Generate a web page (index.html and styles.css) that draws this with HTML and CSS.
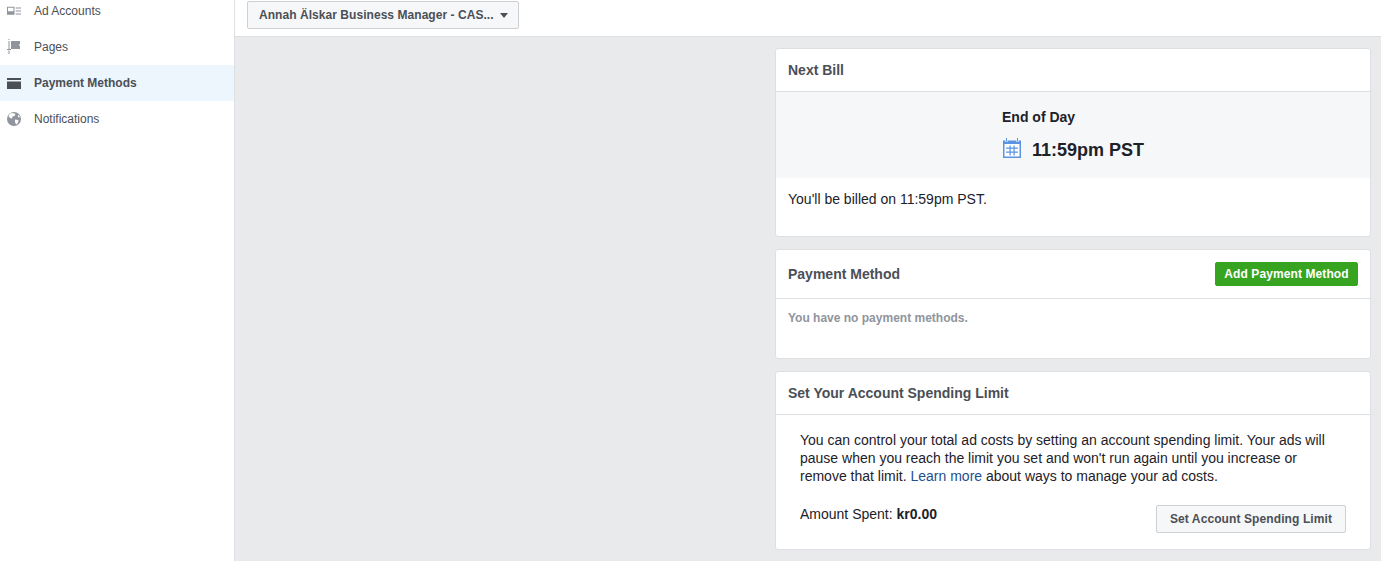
FILE: index.html
```html
<!DOCTYPE html>
<html lang="en">
<head>
<meta charset="utf-8">
<title>Payment Methods</title>
<link rel="stylesheet" href="styles.css">
</head>
<body>
<div class="app">
  <aside class="sidebar">
    <a class="nav-item">
      <svg class="nav-icon" viewBox="0 0 14 14"><path fill="#90949c" fill-rule="evenodd" d="M0 2.700h7.500v8H0zM1 3.700v3.500h5.500V3.700z"/><path fill="#90949c" d="M8.700 3.500H14v1H8.700zM8.700 6.500H14v1H8.700zM8.700 9.500H14v1H8.700z"/></svg>
      <span>Ad Accounts</span>
    </a>
    <a class="nav-item">
      <svg class="nav-icon flag" viewBox="0 0 14 15"><path fill="#90949c" d="M1.500 0h1v1h-1zM1.500 2h1v8h-1zM0 10h4v1H0zM1.500 11.500h1V15h-1zM4 2h9v2.500l-1 1.500 1 1.500V10H4z"/></svg>
      <span>Pages</span>
    </a>
    <a class="nav-item active">
      <svg class="nav-icon wide" viewBox="0 0 14 11"><path fill="#4b4f56" d="M0 0h14v2H0zM0 3.500h14V11H0z"/></svg>
      <span>Payment Methods</span>
    </a>
    <a class="nav-item">
      <svg class="nav-icon" viewBox="0 0 14 14"><circle cx="7" cy="7" r="7" fill="#90949c"/><path fill="#fff" d="M3 1.500 6 1l2.500 1-1 2-2 .5-.5 2-2-.5L1.500 4zM8 7.500l3.500.5-.5 3-2 1.500-1-2.500zM11 2.500 13 5l-2 .5z"/></svg>
      <span>Notifications</span>
    </a>
  </aside>
  <main class="main">
    <header class="topbar">
      <button class="account-select">Annah Älskar Business Manager - CAS... <i class="caret"></i></button>
    </header>
    <div class="content">
      <div class="column">
        <section class="card">
          <h2 class="card-head">Next Bill</h2>
          <div class="bill-band">
            <div class="bill-inner">
              <div class="bill-label">End of Day</div>
              <div class="bill-time">
                <svg class="cal" viewBox="0 0 18 20"><path fill="#5b93e3" d="M0 2.500h18V20H0z"/><path fill="#fff" d="M2.500 1h2v3h-2zM13.500 1h2v3h-2z"/><path fill="#5b93e3" d="M3 0h1v3.500H3zM14 0h1v3.500h-1z"/><path fill="#fff" d="M1.500 6h15v12.500h-15z"/><path fill="#5b93e3" d="M3 9.500h12v1.200H3zM3 13.500h12v1.200H3zM6.500 7.500h1.200v10H6.500zM10.500 7.500h1.200v10h-1.200z"/></svg>
                <span>11:59pm PST</span>
              </div>
            </div>
          </div>
          <p class="bill-note">You'll be billed on 11:59pm PST.</p>
        </section>
        <section class="card">
          <div class="card-head pay-head">
            <h2 class="title">Payment Method</h2>
            <button class="btn-green">Add Payment Method</button>
          </div>
          <p class="empty">You have no payment methods.</p>
        </section>
        <section class="card">
          <h2 class="card-head">Set Your Account Spending Limit</h2>
          <div class="limit-body">
            <p class="limit-text">You can control your total ad costs by setting an account spending limit. Your ads will pause when you reach the limit you set and won't run again until you increase or remove that limit. <a class="link">Learn more</a> about ways to manage your ad costs.</p>
            <div class="limit-row">
              <span>Amount Spent: <b>kr0.00</b></span>
              <button class="btn-plain">Set Account Spending Limit</button>
            </div>
          </div>
        </section>
      </div>
    </div>
  </main>
</div>
</body>
</html>
```
FILE: styles.css
```css
* { box-sizing: border-box; }
html, body { margin: 0; height: 561px; overflow: hidden; }
body { font-family: "Liberation Sans", Arial, sans-serif; font-size: 14px; color: #1d2129; background: #e9eaec; }
.app { display: flex; height: 561px; }
.sidebar { width: 235px; flex: none; background: #fff; border-right: 1px solid #dddfe2; overflow: hidden; }
.nav-item { display: flex; align-items: center; height: 36px; padding-left: 7px; font-size: 12px; color: #4b4f56; }
.nav-item:first-child { height: 29px; align-items: flex-end; padding-bottom: 11px; }
.nav-item span { margin-left: 13px; }
.nav-icon { width: 14px; height: 14px; flex: none; }
.nav-icon.wide { height: 11px; }
.nav-icon.flag { height: 15px; margin-bottom: 2px; }
.nav-item.active { background: #edf5fd; font-weight: bold; }
.main { flex: 1; display: flex; flex-direction: column; min-width: 0; }
.topbar { height: 37px; flex: none; background: #fff; border-bottom: 1px solid #dddfe2; padding: 1px 0 0 12px; }
.account-select { display: block; width: 272px; height: 28px; padding: 0 11px; text-align: left; white-space: nowrap; letter-spacing: .05px; font: bold 12px "Liberation Sans", Arial, sans-serif; color: #4b4f56; background: #f6f7f9; border: 1px solid #ced0d4; border-radius: 2px; }
.caret { display: inline-block; width: 0; height: 0; margin-left: 3px; vertical-align: 1px; border: 4.500px solid transparent; border-top: 5px solid #4b4f56; border-bottom: 0; }
.content { flex: 1; display: flex; justify-content: flex-end; padding: 11px 10px 0 0; }
.column { width: 596px; display: flex; flex-direction: column; gap: 12px; }
.card { background: #fff; border: 1px solid #dddfe2; border-radius: 3px; overflow: hidden; }
.card-head { margin: 0; height: 43px; display: flex; align-items: center; padding: 0 12px 1px 12px; font-size: 14px; font-weight: bold; color: #4b4f56; border-bottom: 1px solid #dddfe2; }
.bill-band { height: 86px; background: #f6f7f9; padding: 17px 0 0 226px; }
.bill-label { font-size: 14px; font-weight: bold; line-height: 17px; }
.bill-time { display: flex; align-items: center; margin-top: 12px; font-size: 18px; font-weight: bold; line-height: 24px; }
.cal { width: 18px; height: 20px; margin: 0 11px 4px 1px; }
.bill-note { margin: 12px 0 0; padding: 0 12px 28px; font-size: 14px; line-height: 18px; }
.pay-head { height: 49px; justify-content: space-between; }
.title { margin: 0; font-size: 14px; font-weight: bold; color: #4b4f56; }
.btn-green { height: 24px; width: 143px; padding: 0; letter-spacing: .1px; font: bold 12px "Liberation Sans", Arial, sans-serif; color: #fff; background: #36a420; border: 1px solid #36a420; border-radius: 2px; }
.empty { margin: 0; padding: 12px 12px 32px; font-size: 12px; font-weight: bold; line-height: 15px; color: #90949c; }
.limit-body { padding: 16px 24px 16px; }
.limit-text { margin: 0; line-height: 18px; font-size: 14px; }
.link { color: #1f4f8f; }
.limit-row { display: flex; justify-content: space-between; align-items: flex-start; margin-top: 20px; line-height: 18px; }
.btn-plain { width: 190px; height: 28px; padding: 0; letter-spacing: .1px; font: bold 12px "Liberation Sans", Arial, sans-serif; color: #4b4f56; background: #f6f7f9; border: 1px solid #ced0d4; border-radius: 2px; }
```
